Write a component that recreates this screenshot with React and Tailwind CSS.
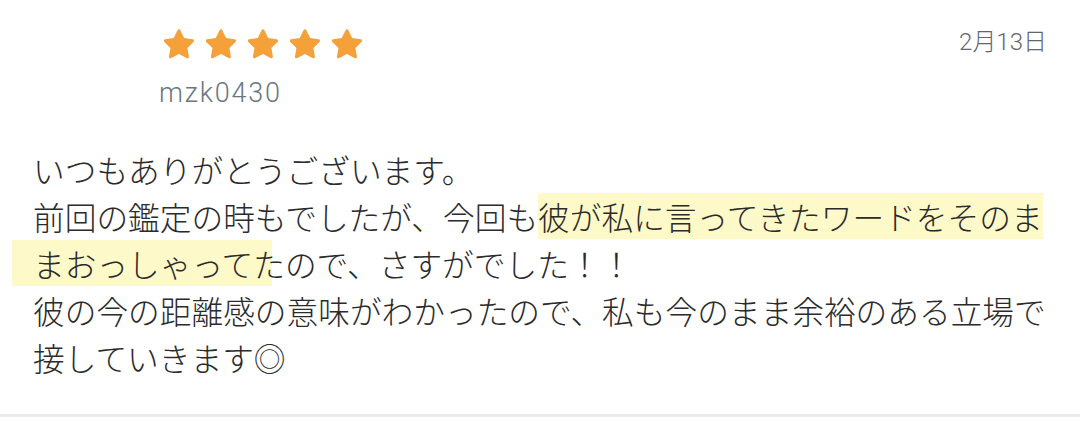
const Star = () => (
  <svg viewBox="0 0 24 24" className="h-[36px] w-[36px] -m-[3px]" fill="#f4a13a">
    <path
      d="M12 2.2c.4 0 .7.2.9.6l2.5 5.2 5.7.8c.9.1 1.2 1.2.6 1.8l-4.1 4 1 5.7c.2.9-.8 1.6-1.6 1.1L12 18.7l-5.1 2.7c-.8.5-1.8-.2-1.6-1.1l1-5.7-4.1-4c-.6-.6-.3-1.7.6-1.8l5.7-.8 2.5-5.2c.2-.4.6-.6 1-.6z"
      strokeLinejoin="round"
    />
  </svg>
);

export default function App() {
  return (
    <div
      className="w-[1080px] h-[422px] bg-white overflow-hidden flex flex-col"
      style={{ fontFamily: '"Noto Sans CJK JP", Roboto, sans-serif' }}
    >
      <div className="flex justify-between pl-[163px] pr-[33px] pt-[29px]">
        <div className="flex flex-col">
          <div className="flex gap-[12px] pl-[1px]">
            <Star />
            <Star />
            <Star />
            <Star />
            <Star />
          </div>
          <div
            className="mt-[19px] -ml-[4px] text-[27px] leading-[30px] tracking-[1.8px] text-[#6b7680]"
            style={{ fontFamily: 'Roboto, "Noto Sans", sans-serif', fontWeight: 300 }}
          >
            mzk0430
          </div>
        </div>
        <div
          className="text-[24px] leading-[28px] text-[#63676b] -mt-[1px]"
          style={{ fontFamily: 'Roboto, "Noto Sans CJK JP", sans-serif', fontWeight: 300 }}
        >
          2月13日
        </div>
      </div>
      <div
        className="mt-[38px] pl-[33px] text-[31.7px] leading-[47px] text-[#2b2b2b] whitespace-nowrap"
        style={{ fontWeight: 300 }}
      >
        <div>いつもありがとうございます。</div>
        <div>
          前回の鑑定の時もでしたが、今回も<span className="bg-[#fdf9c8]">彼が私に言ってきたワードをそのま</span>
        </div>
        <div>
          <span className="-ml-[21px] pl-[21px] bg-no-repeat bg-[linear-gradient(to_right,#fdf9c8_260px,transparent_260px)]">
            まおっしゃってた
          </span>
          ので、さすがでした！！
        </div>
        <div>彼の今の距離感の意味がわかったので、私も今のまま余裕のある立場で</div>
        <div>接していきます◎</div>
      </div>
      <div className="mt-auto mb-[5px] h-[3px] bg-[#ebebeb]" />
    </div>
  );
}
